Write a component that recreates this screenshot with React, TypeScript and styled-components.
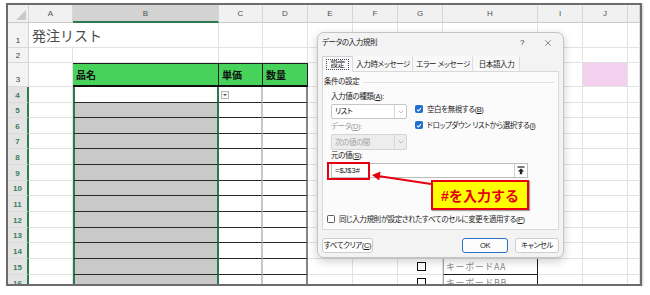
import React from 'react';
import styled, { createGlobalStyle } from 'styled-components';
import { ChevronDown, X } from 'lucide-react';

const FONT = `"Liberation Sans", "Noto Sans CJK JP", sans-serif`;

const COLS = [21, 44, 146, 44, 45, 45, 45, 45, 95, 45, 45, 12];
const ROWS = [18, 25, 15, 24, 16, 15, 16, 15, 16, 16, 15, 16, 16, 15, 16, 16, 16];
const LETTERS = ['A', 'B', 'C', 'D', 'E', 'F', 'G', 'H', 'I', 'J', ''];
const HEADS = ['品名', '単価', '数量'];

const GlobalStyle = createGlobalStyle`
  html, body { margin: 0; padding: 0; background: #fff; }
  body { font-family: ${FONT}; }
  * { box-sizing: border-box; }
`;

const Frame = styled.div`
  position: relative;
  margin: 3px 0 0 6px;
  width: 636px;
  height: 283px;
  border: 2px solid #6c6c6c;
  overflow: hidden;
  box-shadow: 1px 1px 2px rgba(0, 0, 0, 0.2);
`;

const Grid = styled.div`
  display: grid;
  grid-template-columns: ${COLS.map(w => `${w}px`).join(' ')};
  grid-template-rows: ${ROWS.map(h => `${h}px`).join(' ')};
  font-family: ${FONT};
`;

const Corner = styled.div`
  background: #f1f1f1;
  border-right: 1px solid #d4d4d4;
  border-bottom: 1px solid #cacaca;
  display: flex;
  justify-content: flex-end;
  align-items: flex-end;
  padding: 0 2px 2px 0;
`;

const CornerMark = styled.span`
  width: 0;
  height: 0;
  border-left: 10px solid transparent;
  border-bottom: 10px solid #c9c9c9;
`;

const ColHead = styled.div<{ $selected?: boolean }>`
  background: ${p => (p.$selected ? '#d3d3d3' : '#f1f1f1')};
  border-right: 1px solid #d6d6d6;
  border-bottom: ${p => (p.$selected ? '2px solid #2d7a4f' : '1px solid #cacaca')};
  display: flex;
  align-items: center;
  justify-content: center;
  font-size: 8px;
  color: #505050;
`;

const RowHead = styled.div<{ $selected?: boolean }>`
  background: ${p => (p.$selected ? '#e4e4e4' : '#f3f3f3')};
  border-right: ${p => (p.$selected ? '2px solid #2d7a4f' : '1px solid #d2d2d2')};
  border-bottom: 1px solid #dadada;
  display: flex;
  align-items: flex-end;
  justify-content: center;
  padding-bottom: 2px;
  font-size: 8px;
  font-weight: ${p => (p.$selected ? 700 : 400)};
  color: ${p => (p.$selected ? '#3d7d5a' : '#3a3a3a')};
`;

const Cell = styled.div<{ $tint?: string }>`
  background: ${p => p.$tint || '#fff'};
  border-right: 1px solid #e2e2e2;
  border-bottom: 1px solid #e2e2e2;
`;

const TitleCell = styled.div`
  grid-column: span 2;
  background: #fff;
  border-right: 1px solid #e2e2e2;
  border-bottom: 1px solid #e2e2e2;
  display: flex;
  align-items: flex-end;
  padding: 0 0 4px 3px;
  font-family: "Noto Sans CJK JP", sans-serif;
  font-size: 14px;
  line-height: 16px;
  color: #4a4a4a;
`;

const HeadCell = styled.div`
  background: #46d25b;
  border-top: 1px solid #1e1e1e;
  border-right: 1px solid #1e1e1e;
  border-bottom: 2px solid #111;
  display: flex;
  align-items: flex-end;
  padding: 0 0 4px 3px;
  font-family: "Noto Sans CJK JP", sans-serif;
  font-size: 10px;
  font-weight: 700;
  line-height: 12px;
  color: #111;
`;

const ItemCell = styled.div<{ $active?: boolean }>`
  background: ${p => (p.$active ? '#fff' : '#c9c9c9')};
  border-left: 2px solid #2d7a4f;
  border-right: 2px solid #2d7a4f;
  border-bottom: 1px solid #2a2a2a;
`;

const ValueCell = styled.div<{ $end?: boolean }>`
  background: #fff;
  border-right: 2px solid ${p => (p.$end ? '#858585' : '#c8c8c8')};
  border-bottom: 1px solid #2a2a2a;
  display: flex;
  align-items: center;
  padding-left: 2px;
`;

const DropMark = styled.span`
  width: 8px;
  height: 8px;
  border: 1px solid #b4b4b4;
  background: #f7f7f7;
  display: flex;
  align-items: center;
  justify-content: center;

  &::after {
    content: '';
    border-left: 2px solid transparent;
    border-right: 2px solid transparent;
    border-top: 2px solid #555;
  }
`;

const BoxCell = styled(Cell)`
  display: flex;
  align-items: center;
  justify-content: center;
`;

const CheckGlyph = styled.span`
  width: 9px;
  height: 9px;
  border: 1.5px solid #111;
  background: #fff;
  margin-left: 2px;
`;

const ListCell = styled.div`
  background: #fff;
  border-left: 1px solid #a6a6a6;
  border-right: 1px solid #1e1e1e;
  border-bottom: 1px solid #1e1e1e;
  display: flex;
  align-items: center;
  padding-left: 2px;
  font-family: "Noto Sans CJK JP", sans-serif;
  font-size: 9px;
  letter-spacing: 0.6px;
  color: #8a8a8a;
`;

/* ---------- dialog ---------- */

const Dialog = styled.div`
  position: absolute;
  left: 309px;
  top: 27px;
  width: 247px;
  height: 226px;
  background: #f3f3f3;
  border: 1px solid #c4c4c4;
  border-radius: 7px;
  box-shadow: 0 3px 10px rgba(0, 0, 0, 0.2);
  display: flex;
  flex-direction: column;
  font-family: ${FONT};
  font-size: 7.5px;
  line-height: 9px;
  letter-spacing: -0.4px;
  color: #1b1b1b;
  font-feature-settings: "palt";
`;

const TitleBar = styled.div`
  height: 19px;
  display: flex;
  align-items: center;
  padding: 0 10px 0 4px;
`;

const TitleText = styled.div`
  flex: 1;
`;

const TitleButtons = styled.div`
  display: flex;
  align-items: center;
  gap: 19px;
  color: #333;
  font-size: 8px;
`;

const TabStrip = styled.div`
  display: flex;
  height: 15px;
  margin: 4px 4px 0;
  position: relative;
  z-index: 1;
`;

const Tab = styled.div<{ $active?: boolean; $w: number }>`
  width: ${p => p.$w}px;
  display: flex;
  align-items: center;
  justify-content: center;
  background: ${p => (p.$active ? '#fbfbfb' : '#f8f8f8')};
  border: 1px solid ${p => (p.$active ? '#d2d2d2' : 'transparent')};
  border-right: 1px solid #dcdcdc;
  border-bottom: none;
  height: ${p => (p.$active ? 16 : 15)}px;
  white-space: nowrap;
`;

const FocusText = styled.span`
  outline: 1px dotted #444;
  padding: 0 3px;
`;

const Panel = styled.div`
  flex: 0 0 159px;
  margin: 0 4px;
  background: #fbfbfb;
  border: 1px solid #d9d9d9;
  display: flex;
  flex-direction: column;
`;

const GroupHeader = styled.div`
  display: flex;
  align-items: center;
  gap: 4px;
  margin: 5px 4px 0 1px;
  line-height: 10px;

  &::after {
    content: '';
    flex: 1;
    height: 1px;
    background: #e0e0e0;
  }
`;

const FieldLabel = styled.div<{ $muted?: boolean; $gap?: number }>`
  margin-top: ${p => p.$gap ?? 3}px;
  color: ${p => (p.$muted ? '#9a9a9a' : '#1b1b1b')};
  white-space: nowrap;
`;

const Indent = styled.div`
  margin-left: 8px;
  display: flex;
  flex-direction: column;
`;

const FieldRow = styled.div`
  display: flex;
  gap: 8px;
  margin-top: 3px;
`;

const Column = styled.div<{ $gap?: number }>`
  display: flex;
  flex-direction: column;
  gap: ${p => p.$gap ?? 0}px;
`;

const SelectBox = styled.div<{ $disabled?: boolean; $gap?: number }>`
  width: 76px;
  height: ${p => (p.$disabled ? 16 : 15)}px;
  margin-top: ${p => p.$gap ?? 0}px;
  background: ${p => (p.$disabled ? '#ededed' : '#fff')};
  border: 1px solid ${p => (p.$disabled ? '#d4d4d4' : '#c6c6c6')};
  border-radius: 2px;
  display: flex;
  align-items: center;
  color: ${p => (p.$disabled ? '#a2a2a2' : '#1b1b1b')};
`;

const SelectText = styled.span`
  flex: 1;
  padding-left: 3px;
`;

const SelectArrow = styled.span`
  width: 12px;
  height: 100%;
  border-left: 1px solid #d8d8d8;
  display: flex;
  align-items: center;
  justify-content: center;
  color: #7a7a7a;
`;

const CheckRow = styled.label<{ $bottom?: boolean }>`
  display: flex;
  align-items: center;
  gap: 4px;
  height: 10px;
  white-space: nowrap;
  margin: ${p => (p.$bottom ? 'auto 0 5px 4px' : '0')};
`;

const Box = styled.span<{ $checked?: boolean }>`
  width: 8px;
  height: 8px;
  border-radius: 1.5px;
  background: ${p => (p.$checked ? '#1f6fcf' : '#fff')};
  border: 1px solid ${p => (p.$checked ? '#1f6fcf' : '#5a5a5a')};
  display: flex;
  align-items: center;
  justify-content: center;
  flex: none;
`;

const SourceInput = styled.div`
  width: 197px;
  height: 15px;
  margin-top: 3px;
  background: #fff;
  border: 1px solid #bdbdbd;
  display: flex;
  align-items: center;
`;

const SourceText = styled.span`
  flex: 1;
  padding-left: 3px;
  letter-spacing: 0;
`;

const CollapseButton = styled.span`
  width: 13px;
  height: 100%;
  border-left: 1px solid #d0d0d0;
  display: flex;
  align-items: center;
  justify-content: center;
`;

const Footer = styled.div`
  flex: 1;
  display: flex;
  align-items: flex-start;
  gap: 7px;
  padding: 8px 4px 0;
`;

const Button = styled.div<{ $w: number; $primary?: boolean }>`
  width: ${p => p.$w}px;
  height: 15px;
  background: #fdfdfd;
  border: ${p => (p.$primary ? '1.5px solid #2b73c8' : '1px solid #cdcdcd')};
  border-radius: 3px;
  display: flex;
  align-items: center;
  justify-content: center;
  white-space: nowrap;
  margin-left: ${p => (p.$primary ? 'auto' : '0')};
`;

const U = styled.span`
  text-decoration: underline;
`;

/* ---------- annotations ---------- */

const Highlight = styled.div`
  position: absolute;
  left: 319px;
  top: 157px;
  width: 43px;
  height: 18px;
  border: 2px solid #e60012;
  z-index: 3;
`;

const Callout = styled.div`
  position: absolute;
  left: 423px;
  top: 175px;
  width: 98px;
  height: 30px;
  background: #ffff00;
  border: 2px solid #e60012;
  display: flex;
  align-items: center;
  justify-content: center;
  font-family: "Liberation Sans", "Noto Sans CJK JP", sans-serif;
  font-size: 14px;
  font-weight: 700;
  color: #e60012;
  box-shadow: 1px 1px 1px rgba(0, 0, 0, 0.35);
  z-index: 3;
`;

const Arrow = styled.svg`
  position: absolute;
  left: 360px;
  top: 165px;
  z-index: 3;
`;

function renderCell(r: number, c: number) {
  const key = `${r}-${c}`;
  if (r === 1 && c === 0) return <TitleCell key={key}>発注リスト</TitleCell>;
  if (r === 1 && c === 1) return null;
  if (r === 3 && c >= 1 && c <= 3) return <HeadCell key={key}>{HEADS[c - 1]}</HeadCell>;
  if (r >= 4 && c === 1) return <ItemCell key={key} $active={r === 4} />;
  if (r >= 4 && (c === 2 || c === 3))
    return (
      <ValueCell key={key} $end={c === 3}>
        {r === 4 && c === 2 && <DropMark />}
      </ValueCell>
    );
  if (r === 3 && c === 9) return <Cell key={key} $tint="#f3d1ee" />;
  if (r >= 15 && c === 6)
    return (
      <BoxCell key={key}>
        <CheckGlyph />
      </BoxCell>
    );
  if (r >= 15 && c === 7) return <ListCell key={key}>{r === 15 ? 'キーボードAA' : 'キーボードBB'}</ListCell>;
  return <Cell key={key} />;
}

const Check = () => (
  <svg width="7" height="7" viewBox="0 0 7 7">
    <path d="M1.2 3.6 L2.8 5.2 L5.9 1.8" fill="none" stroke="#fff" strokeWidth="1.2" />
  </svg>
);

export default function App() {
  const cells: React.ReactNode[] = [
    <Corner key="corner">
      <CornerMark />
    </Corner>,
    ...LETTERS.map(l => (
      <ColHead key={`h-${l || 'k'}`} $selected={l === 'B'}>
        {l}
      </ColHead>
    )),
  ];
  for (let r = 1; r <= 16; r++) {
    cells.push(
      <RowHead key={`r-${r}`} $selected={r >= 4}>
        {r}
      </RowHead>
    );
    for (let c = 0; c < 11; c++) cells.push(renderCell(r, c));
  }

  return (
    <>
      <GlobalStyle />
      <Frame>
        <Grid>{cells}</Grid>

        <Dialog>
          <TitleBar>
            <TitleText>データの入力規則</TitleText>
            <TitleButtons>
              <span>?</span>
              <X size={10} strokeWidth={1.3} />
            </TitleButtons>
          </TitleBar>

          <TabStrip>
            <Tab $active $w={31}>
              <FocusText>設定</FocusText>
            </Tab>
            <Tab $w={60}>入力時メッセージ</Tab>
            <Tab $w={60}>エラー メッセージ</Tab>
            <Tab $w={47}>日本語入力</Tab>
          </TabStrip>

          <Panel>
            <GroupHeader>条件の設定</GroupHeader>
            <Indent>
              <FieldLabel $gap={5}>
                入力値の種類(<U>A</U>):
              </FieldLabel>
              <FieldRow>
                <Column>
                  <SelectBox>
                    <SelectText>リスト</SelectText>
                    <SelectArrow>
                      <ChevronDown size={8} strokeWidth={1.4} />
                    </SelectArrow>
                  </SelectBox>
                  <FieldLabel $muted>
                    データ(<U>D</U>):
                  </FieldLabel>
                  <SelectBox $disabled $gap={3}>
                    <SelectText>次の値の間</SelectText>
                    <SelectArrow>
                      <ChevronDown size={8} strokeWidth={1.4} />
                    </SelectArrow>
                  </SelectBox>
                </Column>
                <Column $gap={6}>
                  <CheckRow>
                    <Box $checked>
                      <Check />
                    </Box>
                    <span>
                      空白を無視する(<U>B</U>)
                    </span>
                  </CheckRow>
                  <CheckRow>
                    <Box $checked>
                      <Check />
                    </Box>
                    <span>
                      ドロップダウン リストから選択する(<U>I</U>)
                    </span>
                  </CheckRow>
                </Column>
              </FieldRow>
              <FieldLabel $gap={1}>
                元の値(<U>S</U>):
              </FieldLabel>
              <SourceInput>
                <SourceText>=$J$3#</SourceText>
                <CollapseButton>
                  <svg width="8" height="9" viewBox="0 0 8 9">
                    <path d="M0.5 1 H7.5" stroke="#222" strokeWidth="1.2" />
                    <path d="M4 2.4 L7.2 5.6 H5.2 V8.2 H2.8 V5.6 H0.8 Z" fill="#222" />
                  </svg>
                </CollapseButton>
              </SourceInput>
            </Indent>
            <CheckRow $bottom>
              <Box />
              <span>
                同じ入力規則が設定されたすべてのセルに変更を適用する(<U>P</U>)
              </span>
            </CheckRow>
          </Panel>

          <Footer>
            <Button $w={51}>
              すべてクリア(<U>C</U>)
            </Button>
            <Button $w={46} $primary>
              OK
            </Button>
            <Button $w={44}>キャンセル</Button>
          </Footer>
        </Dialog>

        <Highlight />
        <Arrow width="70" height="20" viewBox="0 0 70 20">
          <line x1="63" y1="14" x2="10" y2="6" stroke="#e60012" strokeWidth="2.2" />
          <polygon points="4,5 12.5,1.6 11.2,10.6" fill="#e60012" />
        </Arrow>
        <Callout>#を入力する</Callout>
      </Frame>
    </>
  );
}
